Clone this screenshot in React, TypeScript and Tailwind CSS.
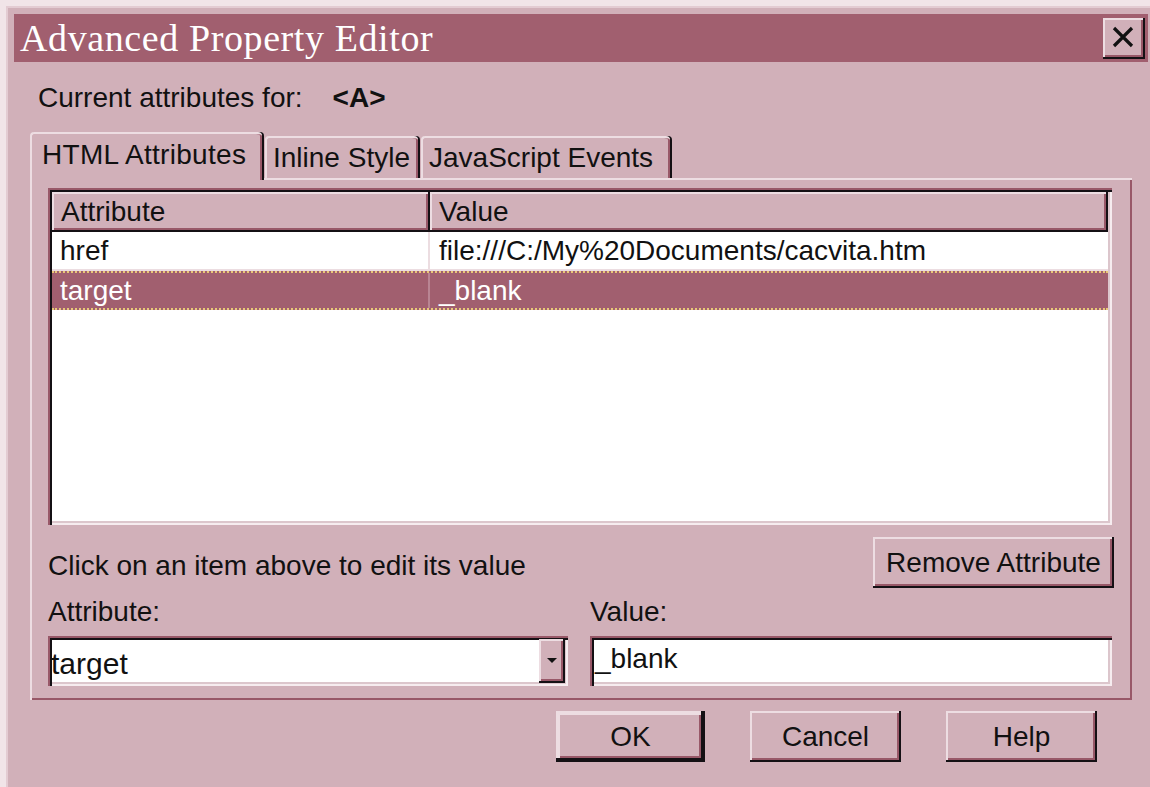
import React from "react";

const sans = "font-['Liberation_Sans',Arial,sans-serif]";

// 3D edges drawn with stacked inset shadows
const raised =
  "shadow-[inset_-2px_-2px_0_#141014,inset_2px_2px_0_#eddde2,inset_-4px_-4px_0_#985868]";
const sunken =
  "shadow-[inset_2px_2px_0_#985868,inset_4px_4px_0_#141014,inset_-2px_-2px_0_#f6ecef,inset_-4px_-4px_0_#dcc6cc]";

const rows = [
  { name: "href", value: "file:///C:/My%20Documents/cacvita.htm", selected: false },
  { name: "target", value: "_blank", selected: true },
];

const Tab = ({ label, active, width }: { label: string; active?: boolean; width: string }) => (
  <div
    className={`${width} relative flex items-center whitespace-nowrap rounded-t-[4px] bg-[#d1b0b9] border-t-2 border-l-2 border-[#eddde2] shadow-[inset_-2px_0_0_#985868,2px_0_0_#141014] ${
      active ? "h-[48px] -mb-[2px] z-10 pl-[10px]" : "h-[42px] pl-[6px]"
    }`}
  >
    <span className={active ? "-mt-[4px] tracking-[0.3px]" : ""}>{label}</span>
  </div>
);

const Button = ({ label, width, isDefault }: { label: string; width: string; isDefault?: boolean }) => (
  <div
    className={`${width} h-[51px] flex items-center justify-center bg-[#d1b0b9] ${
      isDefault
        ? "shadow-[inset_-4px_-4px_0_#141014,inset_4px_4px_0_#eddde2,inset_-6px_-6px_0_#985868,inset_2px_2px_0_#141014]"
        : raised
    }`}
  >
    {label}
  </div>
);

export default function App() {
  return (
    <div className={`w-[1150px] h-[787px] overflow-hidden bg-[#f1e4e8] pt-[6px] pl-[6px] text-[28px] text-[#111] ${sans}`}>
      <div className="w-[1160px] h-[800px] bg-[#d1b0b9] border-t-2 border-l-2 border-[#e3cbd2] pt-[6px] pl-[6px]">
        {/* title bar */}
        <div className="w-[1134px] h-[48px] bg-[#a15f6f] flex items-center justify-between pl-[6px] pr-[3px]">
          <span className="font-['Liberation_Serif','Times_New_Roman',serif] text-[38px] tracking-[0.6px] text-white leading-none">
            Advanced Property Editor
          </span>
          <div className={`w-[42px] h-[41px] bg-[#d1b0b9] flex items-center justify-center ${raised}`}>
            <svg width="24" height="24" viewBox="0 0 24 24" className="-mt-[2px] -ml-[2px]">
              <path d="M3 3 L21 21 M21 3 L3 21" stroke="#111" strokeWidth="3.2" />
            </svg>
          </div>
        </div>

        <div className="h-[70px] flex items-center pl-[24px] pt-[2px]">
          <span>Current attributes for:</span>
          <span className="ml-[30px] font-bold">&lt;A&gt;</span>
        </div>

        {/* tabs */}
        <div className="ml-[16px] w-[1102px]">
          <div className="flex items-end gap-[3px] h-[46px]">
            <Tab label="HTML Attributes" active width="w-[232px]" />
            <Tab label="Inline Style" width="w-[153px]" />
            <Tab label="JavaScript Events" width="w-[249px]" />
          </div>

          <div className="h-[522px] border-t-2 border-l-2 border-[#eddde2] shadow-[inset_-2px_-2px_0_#985868] pt-[8px] pl-[16px] pr-[18px]">
            {/* list view */}
            <div className={`w-[1064px] h-[337px] bg-white p-[4px] ${sunken}`}>
              <div className="flex h-[40px] bg-[#d1b0b9]">
                <div className={`w-[378px] flex items-center pl-[9px] ${raised}`}>Attribute</div>
                <div className={`flex-1 flex items-center pl-[9px] ${raised}`}>Value</div>
              </div>
              {rows.map((row) => (
                <div
                  key={row.name}
                  className={`flex h-[39px] ${
                    row.selected
                      ? "bg-[#a15f6f] text-white border-y-2 border-dotted border-[#e8c878]"
                      : "bg-white border-b-2 border-[#ecdde1]"
                  }`}
                >
                  <div
                    className={`w-[378px] flex items-center pl-[8px] border-r-2 ${
                      row.selected ? "border-[#b98593]" : "border-[#ecdde1]"
                    }`}
                  >
                    {row.name}
                  </div>
                  <div className="flex-1 flex items-center pl-[9px]">{row.value}</div>
                </div>
              ))}
            </div>

            <div className="flex items-center justify-between mt-[12px] h-[51px]">
              <span className="mt-[6px]">Click on an item above to edit its value</span>
              <Button label="Remove Attribute" width="w-[241px]" />
            </div>

            <div className="flex mt-[8px] h-[32px] items-center">
              <span className="w-[542px]">Attribute:</span>
              <span>Value:</span>
            </div>

            <div className="flex gap-[22px] mt-[8px]">
              <div className={`w-[520px] h-[50px] bg-white flex items-center pl-[3px] pr-[3px] ${sunken}`}>
                <span className="flex-1 text-[30px] mt-[4px]">target</span>
                <div className={`w-[26px] h-[44px] bg-[#d1b0b9] flex items-center justify-center ${raised}`}>
                  <svg width="12" height="8" viewBox="0 0 12 8">
                    <path d="M1 1 H11 L6 6 Z" fill="#111" />
                  </svg>
                </div>
              </div>
              <div className={`w-[522px] h-[50px] bg-white flex items-center pl-[5px] ${sunken}`}>
                <span className="-mt-[4px]">_blank</span>
              </div>
            </div>
          </div>

          <div className="flex justify-end gap-[45px] pr-[35px] mt-[11px]">
            <Button label="OK" width="w-[149px]" isDefault />
            <Button label="Cancel" width="w-[151px]" />
            <Button label="Help" width="w-[151px]" />
          </div>
        </div>
      </div>
    </div>
  );
}
